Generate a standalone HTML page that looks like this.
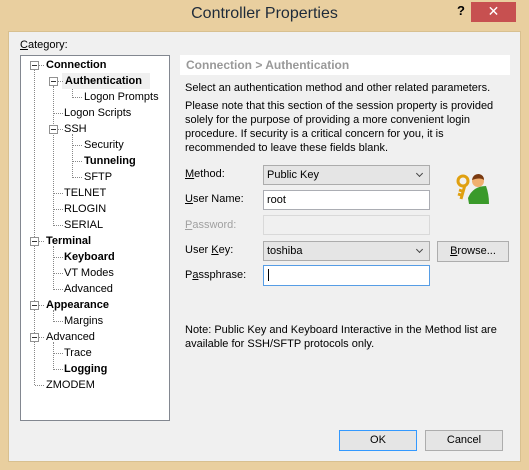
<html><head><style>
body{margin:0;width:529px;height:470px;background:#e9cf9f;font-family:"Liberation Sans",sans-serif;font-size:11px;color:#000;position:relative;overflow:hidden}
.a{position:absolute;white-space:nowrap}
.b{font-weight:bold}
.box{position:absolute;box-sizing:border-box}
.ex{position:absolute;width:9px;height:9px;box-sizing:border-box;border:1px solid #919191;background:#fff}
.ex:after{content:"";position:absolute;left:1px;top:3px;width:5px;height:1px;background:#333}
.h{position:absolute;border-top:1px dotted #888;height:0}
.v{position:absolute;border-left:1px dotted #888;width:0}
.btn{position:absolute;box-sizing:border-box;border:1px solid #adadad;background:#e5e5e5;text-align:center;line-height:18px}
.inp{position:absolute;box-sizing:border-box;border:1px solid #abadb3;background:#fff;padding-left:3px;line-height:18px}
.sel{position:absolute;box-sizing:border-box;border:1px solid #acacac;background:#e5e5e5;padding-left:3px;line-height:18px}
.sel:after{content:"";position:absolute;right:7px;top:5px;width:4px;height:4px;border-right:1.5px solid #444;border-bottom:1.5px solid #444;transform:rotate(45deg)}
.t .a{margin-top:1px}
</style></head><body>
<div class="a" style="left:0;top:5px;width:529px;text-align:center;font-size:16px;color:#1e2b3a">Controller Properties</div>
<div class="a b" style="left:457px;top:3px;font-size:13px">?</div>
<div class="box" style="left:471px;top:2px;width:45px;height:20px;background:#c75050;color:#fff;text-align:center;font-size:14px;line-height:19px">✕</div>
<div class="box" style="left:8px;top:31px;width:513px;height:431px;background:#f0f0f0;border:1px solid #d8c090"></div>
<div class="a" style="left:20px;top:39px"><u>C</u>ategory:</div>
<div class="box" style="left:20px;top:55px;width:150px;height:366px;background:#fff;border:1px solid #828790"></div>
<div class="v" style="left:34px;top:70px;height:315px"></div>
<div class="v" style="left:53px;top:86px;height:140px"></div>
<div class="v" style="left:72px;top:86px;height:12px"></div>
<div class="v" style="left:72px;top:134px;height:44px"></div>
<div class="v" style="left:53px;top:246px;height:44px"></div>
<div class="v" style="left:53px;top:310px;height:12px"></div>
<div class="v" style="left:53px;top:342px;height:28px"></div>
<div class="box" style="left:62px;top:73px;width:88px;height:16px;background:#f0f0f0"></div>
<div class="t" style="position:absolute;left:0;top:0">
<div class="ex" style="left:30px;top:61px"></div><div class="h" style="left:39px;top:65px;width:5px"></div><div class="a b" style="left:46px;top:58px">Connection</div>
<div class="ex" style="left:49px;top:77px"></div><div class="h" style="left:58px;top:81px;width:5px"></div><div class="a b" style="left:65px;top:74px">Authentication</div>
<div class="h" style="left:73px;top:97px;width:9px"></div><div class="a" style="left:84px;top:90px">Logon Prompts</div>
<div class="h" style="left:54px;top:113px;width:9px"></div><div class="a" style="left:64px;top:106px">Logon Scripts</div>
<div class="ex" style="left:49px;top:125px"></div><div class="h" style="left:58px;top:129px;width:5px"></div><div class="a" style="left:64px;top:122px">SSH</div>
<div class="h" style="left:73px;top:145px;width:9px"></div><div class="a" style="left:84px;top:138px">Security</div>
<div class="h" style="left:73px;top:161px;width:9px"></div><div class="a b" style="left:84px;top:154px">Tunneling</div>
<div class="h" style="left:73px;top:177px;width:9px"></div><div class="a" style="left:84px;top:170px">SFTP</div>
<div class="h" style="left:54px;top:193px;width:9px"></div><div class="a" style="left:64px;top:186px">TELNET</div>
<div class="h" style="left:54px;top:209px;width:9px"></div><div class="a" style="left:64px;top:202px">RLOGIN</div>
<div class="h" style="left:54px;top:225px;width:9px"></div><div class="a" style="left:64px;top:218px">SERIAL</div>
<div class="ex" style="left:30px;top:237px"></div><div class="h" style="left:39px;top:241px;width:5px"></div><div class="a b" style="left:46px;top:234px">Terminal</div>
<div class="h" style="left:54px;top:257px;width:9px"></div><div class="a b" style="left:64px;top:250px">Keyboard</div>
<div class="h" style="left:54px;top:273px;width:9px"></div><div class="a" style="left:64px;top:266px">VT Modes</div>
<div class="h" style="left:54px;top:289px;width:9px"></div><div class="a" style="left:64px;top:282px">Advanced</div>
<div class="ex" style="left:30px;top:301px"></div><div class="h" style="left:39px;top:305px;width:5px"></div><div class="a b" style="left:46px;top:298px">Appearance</div>
<div class="h" style="left:54px;top:321px;width:9px"></div><div class="a" style="left:64px;top:314px">Margins</div>
<div class="ex" style="left:30px;top:333px"></div><div class="h" style="left:39px;top:337px;width:5px"></div><div class="a" style="left:46px;top:330px">Advanced</div>
<div class="h" style="left:54px;top:353px;width:9px"></div><div class="a" style="left:64px;top:346px">Trace</div>
<div class="h" style="left:54px;top:369px;width:9px"></div><div class="a b" style="left:64px;top:362px">Logging</div>
<div class="h" style="left:35px;top:385px;width:9px"></div><div class="a" style="left:46px;top:378px">ZMODEM</div>
</div>
<div class="box" style="left:180px;top:55px;width:330px;height:20px;background:#fff"></div>
<div class="a b" style="left:186px;top:58px;color:#999;font-size:12px">Connection &gt; Authentication</div>
<div class="a" style="left:185px;top:82px">Select an authentication method and other related parameters.</div>
<div class="a" style="left:185px;top:99px;line-height:14px">Please note that this section of the session property is provided<br>solely for the purpose of providing a more convenient login<br>procedure. If security is a critical concern for you, it is<br>recommended to leave these fields blank.</div>
<div class="a" style="left:185px;top:168px"><u>M</u>ethod:</div>
<div class="sel" style="left:263px;top:165px;width:167px;height:20px">Public Key</div>
<div class="a" style="left:185px;top:193px"><u>U</u>ser Name:</div>
<div class="inp" style="left:263px;top:190px;width:167px;height:20px">root</div>
<div class="a" style="left:185px;top:219px;color:#a0a0a0"><u>P</u>assword:</div>
<div class="box" style="left:263px;top:215px;width:167px;height:20px;border:1px solid #d9d9d9;background:#f0f0f0"></div>
<div class="a" style="left:185px;top:244px">User <u>K</u>ey:</div>
<div class="sel" style="left:263px;top:241px;width:167px;height:20px">toshiba</div>
<div class="btn" style="left:437px;top:241px;width:72px;height:21px"><u>B</u>rowse...</div>
<div class="a" style="left:185px;top:269px">P<u>a</u>ssphrase:</div>
<div class="inp" style="left:263px;top:265px;width:167px;height:21px;border-color:#569de5"><span style="border-left:1px solid #000;margin-left:1px">&nbsp;</span></div>
<svg class="a" style="left:455px;top:172px" width="36" height="34" viewBox="0 0 36 34">
<path d="M13 26 Q18 14 31 14 Q34 22 34 32 L14 32 Z" fill="#3a9a2a"/>
<circle cx="23" cy="9" r="6" fill="#f0b070"/><path d="M17 8 Q18 2 24 2 Q29 3 29 8 Q25 5 17 8Z" fill="#7a3a10"/>
<circle cx="8" cy="9" r="5" fill="none" stroke="#e0a010" stroke-width="3"/>
<path d="M10 13 L6 27 M6 23 L3 22 M7 19 L4 18" stroke="#e0a010" stroke-width="3" fill="none"/>
</svg>
<div class="a" style="left:185px;top:323px;line-height:14px">Note: Public Key and Keyboard Interactive in the Method list are<br>available for SSH/SFTP protocols only.</div>
<div class="btn" style="left:339px;top:430px;width:78px;height:21px;border-color:#3399ff">OK</div>
<div class="btn" style="left:425px;top:430px;width:78px;height:21px">Cancel</div>
</body></html>
